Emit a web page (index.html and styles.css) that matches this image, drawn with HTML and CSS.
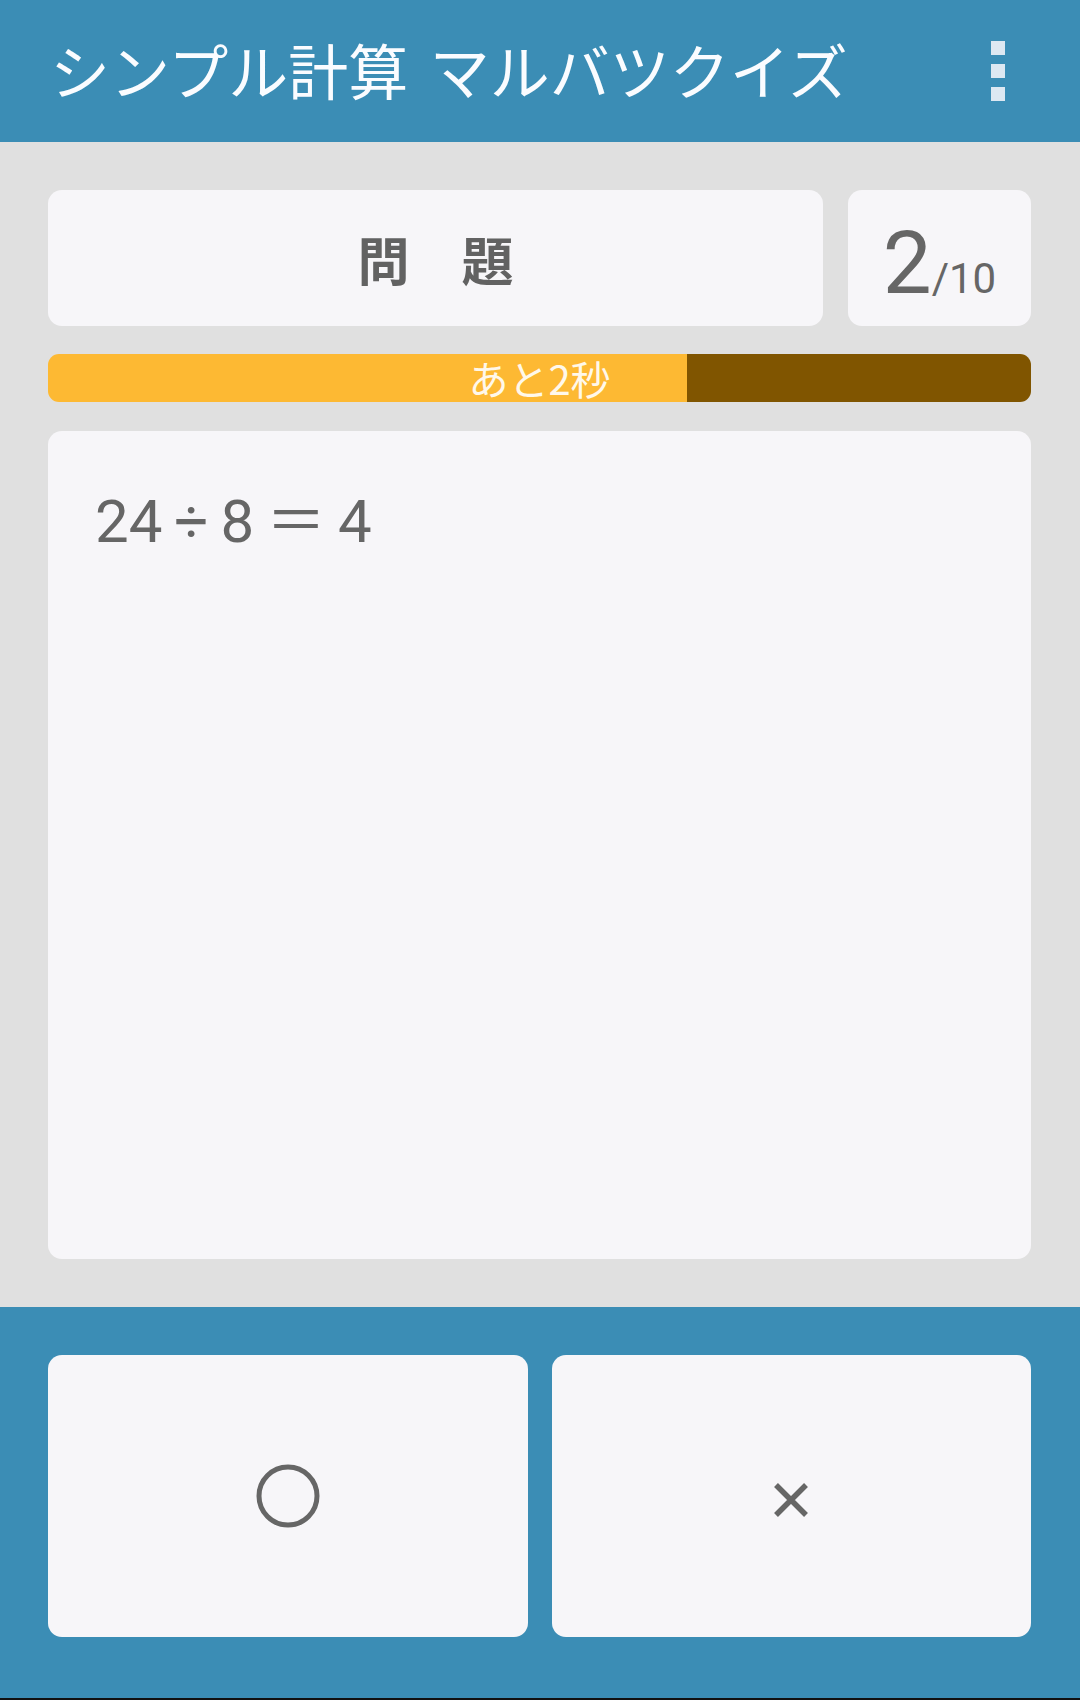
FILE: index.html
```html
<!DOCTYPE html>
<html lang="ja">
<head>
    <meta charset="UTF-8">
    <title>シンプル計算 マルバツクイズ</title>
    <link rel="stylesheet" href="styles.css">
</head>
<body>
    <div id="app">
        <header class="barra">
            <h1 class="titulo">シンプル計算 マルバツクイズ</h1>
            <div class="menu">
                <span></span><span></span><span></span>
            </div>
        </header>

        <main class="quiz">
            <div class="topo">
                <div class="cartao rotulo">問　題</div>
                <div class="cartao contador"><span class="atual">2</span><span class="total">/10</span></div>
            </div>

            <!-- barra de tempo: --resto = fração que ainda falta -->
            <div class="tempo" style="--resto: 65%">あと2秒</div>

            <div class="cartao pergunta">
                <p class="expressao">24 ÷ 8 ＝ 4</p>
            </div>
        </main>

        <footer class="respostas">
            <button class="cartao resposta" aria-label="○">
                <svg width="70" height="70" viewBox="0 0 70 70">
                    <circle cx="35" cy="35" r="29" fill="none" stroke="#666" stroke-width="5"/>
                </svg>
            </button>
            <button class="cartao resposta" aria-label="×">
                <svg width="40" height="40" viewBox="0 0 40 40" class="xis">
                    <path d="M5 5 L35 35 M35 5 L5 35" stroke="#666" stroke-width="5.5" fill="none"/>
                </svg>
            </button>
        </footer>
    </div>
</body>
</html>
```

FILE: styles.css
```css
body{
    margin: 0;
    font-family: Roboto, "Noto Sans CJK JP", sans-serif;
    color: #666;
}
#app{
    width: 1080px;
    height: 1700px;
    display: flex;
    flex-direction: column;
    background-color: #e0e0e0;
    border-bottom: 2px solid #111;
    box-sizing: border-box;
}
.barra{
    height: 142px;
    flex-shrink: 0;
    background-color: #3b8db5;
    display: flex;
    align-items: center;
    padding: 0 75px 0 50px;
}
.titulo{
    flex: 1;
    margin: 0;
    font-family: "Noto Sans CJK JP", sans-serif;
    font-weight: normal;
    font-size: 60px;
    line-height: 1;
    color: #fafcff;
    word-spacing: 8px;
    margin-top: -4px;
}
.menu{
    display: flex;
    flex-direction: column;
    gap: 9px;
}
.menu span{
    width: 14px;
    height: 14px;
    background-color: #dde8f2;
}
.quiz{
    flex: 1;
    padding: 48px 49px 48px 48px;
    display: flex;
    flex-direction: column;
}
.cartao{
    background-color: #f7f6f9;
    border-radius: 14px;
}
.topo{
    display: flex;
    gap: 25px;
    height: 136px;
}
.rotulo{
    flex: 1;
    display: flex;
    align-items: center;
    justify-content: center;
    font-family: "Noto Sans CJK JP", sans-serif;
    font-weight: bold;
    font-size: 52px;
    color: #626262;
}
.contador{
    width: 183px;
    display: flex;
    align-items: baseline;
    justify-content: center;
    padding-top: 30px;
    box-sizing: border-box;
    line-height: 1;
}
.atual{
    font-size: 87px;
}
.total{
    font-size: 42px;
}
.tempo{
    margin-top: 28px;
    height: 48px;
    border-radius: 11px;
    background: linear-gradient(to right, #fdb933 var(--resto), #805500 var(--resto));
    display: flex;
    align-items: center;
    justify-content: center;
    font-family: "Noto Sans CJK JP", sans-serif;
    font-size: 40px;
    line-height: 1;
    color: #fff8ea;
}
.pergunta{
    margin-top: 29px;
    flex: 1;
    padding: 61px 47px;
}
.expressao{
    margin: 0;
    font-size: 60px;
    line-height: 1;
    word-spacing: -3px;
}
.respostas{
    height: 391px;
    flex-shrink: 0;
    box-sizing: border-box;
    background-color: #3b8db5;
    padding: 48px 49px 0 48px;
    display: flex;
    gap: 24px;
}
.resposta{
    flex: 1;
    height: 282px;
    border: none;
    border-radius: 14px;
    display: flex;
    align-items: center;
    justify-content: center;
    padding: 0;
}
.xis{
    margin-top: 8px;
}
```
